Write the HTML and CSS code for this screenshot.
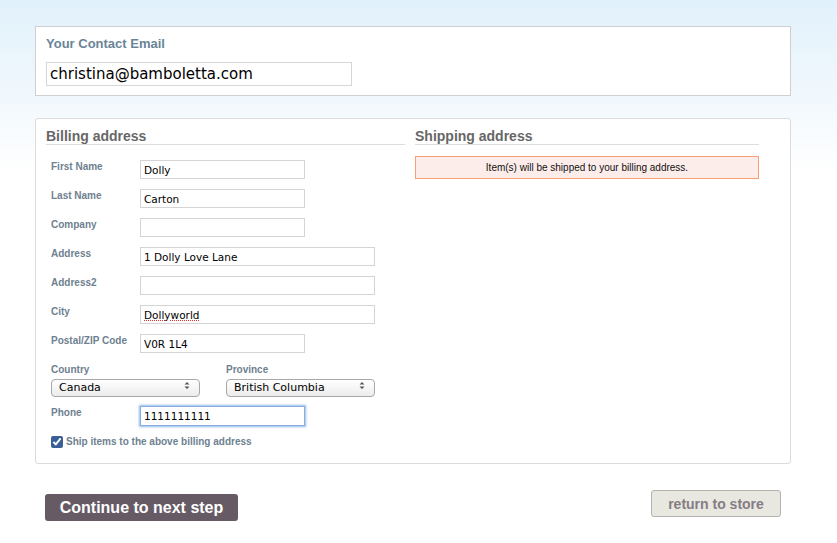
FILE: index.html
```html
<!DOCTYPE html>
<html lang="en">
<head>
    <meta charset="UTF-8">
    <meta name="viewport" content="width=device-width, initial-scale=1.0">
    <title>Checkout</title>
    <link rel="stylesheet" href="styles.css">
</head>
<body>
    <div class="page">
        <div class="box contact">
            <h3>Your Contact Email</h3>
            <input class="email" type="text" value="christina@bamboletta.com">
        </div>

        <div class="box addresses">
            <div class="billing">
                <h2>Billing address</h2>
                <div class="form">
                    <div class="row"><label>First Name</label><input type="text" value="Dolly"></div>
                    <div class="row"><label>Last Name</label><input type="text" value="Carton"></div>
                    <div class="row"><label>Company</label><input type="text" value=""></div>
                    <div class="row"><label>Address</label><input class="wide" type="text" value="1 Dolly Love Lane"></div>
                    <div class="row"><label>Address2</label><input class="wide" type="text" value=""></div>
                    <div class="row"><label>City</label><input class="wide misspelled" type="text" value="Dollyworld"></div>
                    <div class="row"><label>Postal/ZIP Code</label><input type="text" value="V0R 1L4"></div>
                    <div class="selects">
                        <div class="group">
                            <label>Country</label>
                            <div class="select-wrap">
                                <select><option>Canada</option></select>
                                <svg class="arrows" width="6" height="9" viewBox="0 0 6 9"><path d="M0.5 3.5 L3 1 L5.5 3.5 Z M0.5 5.5 L3 8 L5.5 5.5 Z" fill="#555"/></svg>
                            </div>
                        </div>
                        <div class="group">
                            <label>Province</label>
                            <div class="select-wrap">
                                <select><option>British Columbia</option></select>
                                <svg class="arrows" width="6" height="9" viewBox="0 0 6 9"><path d="M0.5 3.5 L3 1 L5.5 3.5 Z M0.5 5.5 L3 8 L5.5 5.5 Z" fill="#555"/></svg>
                            </div>
                        </div>
                    </div>
                    <div class="row phone"><label>Phone</label><input class="focused" type="text" value="1111111111"></div>
                    <div class="check">
                        <input type="checkbox" checked>
                        <span>Ship items to the above billing address</span>
                    </div>
                </div>
            </div>
            <div class="shipping">
                <h2>Shipping address</h2>
                <div class="notice">Item(s) will be shipped to your billing address.</div>
            </div>
        </div>

        <div class="actions">
            <button class="continue">Continue to next step</button>
            <button class="return">return to store</button>
        </div>
    </div>
</body>
</html>
```

FILE: styles.css
```css
html {
    height: 100%;
}
body {
    margin: 0;
    padding: 0;
    min-height: 100%;
    background: linear-gradient(#e1f1fb 0, #f3f9fd 110px, #ffffff 170px);
    font-family: "Liberation Sans", Arial, sans-serif;
}
.page {
    width: 756px;
    margin-left: 35px;
    padding-top: 26px;
}
.box {
    background: #ffffff;
    border: 1px solid #cfcfcf;
    box-sizing: border-box;
}
.contact {
    height: 70px;
    padding: 8px 10px 0;
}
.contact h3 {
    margin: 0;
    font-size: 13px;
    line-height: 18px;
    color: #6a8497;
}
.email {
    display: block;
    margin-top: 9px;
    width: 306px;
    height: 24px;
    box-sizing: border-box;
    border: 1px solid #d6d6d6;
    padding: 0 3px;
    font-family: "DejaVu Sans", sans-serif;
    font-size: 15px;
    color: #000;
    outline: none;
}
.addresses {
    margin-top: 22px;
    height: 346px;
    border-color: #dcdcdc;
    border-radius: 3px;
    padding: 9px 31px 0 10px;
    display: flex;
    gap: 10px;
}
.billing {
    width: 359px;
}
.shipping {
    width: 344px;
}
h2 {
    margin: 0;
    font-size: 14px;
    line-height: 16px;
    color: #676767;
    border-bottom: 1px solid #dddddd;
}
.form {
    margin-top: 15px;
    padding-left: 5px;
}
.row {
    display: flex;
    align-items: flex-start;
    margin-bottom: 10px;
}
label {
    font-size: 10px;
    font-weight: bold;
    line-height: 13px;
    color: #6e8190;
}
.row label {
    width: 89px;
    flex: none;
}
.row input {
    width: 165px;
    height: 19px;
    box-sizing: border-box;
    border: 1px solid #d4d4d4;
    padding: 0 3px;
    font-family: "DejaVu Sans", sans-serif;
    font-size: 10.5px;
    color: #000;
    outline: none;
}
.row input.wide {
    width: 235px;
}
.misspelled {
    text-decoration: underline dotted #e03030;
}
.selects {
    display: flex;
    gap: 26px;
}
.group label {
    display: block;
}
.select-wrap {
    position: relative;
    margin-top: 1px;
}
select {
    appearance: none;
    width: 149px;
    height: 18px;
    box-sizing: border-box;
    border: 1px solid #a8a8a8;
    border-radius: 4px;
    background: linear-gradient(#ffffff, #ececec);
    padding: 0 0 0 7px;
    font-family: "DejaVu Sans", sans-serif;
    font-size: 11px;
    color: #000;
    outline: none;
}
.arrows {
    position: absolute;
    right: 10px;
    top: 4px;
    pointer-events: none;
}
.phone {
    margin-top: 9px;
}
.row input.focused {
    height: 20px;
    border-color: #86aee0;
    box-shadow: 0 0 2px 1px #94bbe8;
}
.check {
    display: flex;
    align-items: center;
}
.check input {
    margin: 0 3px 0 0;
    width: 12px;
    height: 12px;
    accent-color: #3a5f94;
}
.check span {
    font-size: 10px;
    font-weight: bold;
    color: #6e8190;
}
.notice {
    margin-top: 11px;
    height: 23px;
    box-sizing: border-box;
    border: 1px solid #f6a073;
    background: #fdedea;
    text-align: center;
    font-size: 10px;
    line-height: 21px;
    color: #111;
}
.actions {
    display: flex;
    justify-content: space-between;
    align-items: flex-start;
    margin-top: 26px;
    padding: 0 10px;
}
button {
    font-family: "Liberation Sans", Arial, sans-serif;
    font-weight: bold;
    border-radius: 3px;
    cursor: pointer;
}
.continue {
    margin-top: 4px;
    width: 193px;
    height: 27px;
    background: #665a65;
    color: #ffffff;
    border: none;
    font-size: 16px;
    padding: 0;
}
.return {
    width: 130px;
    height: 27px;
    background: #e9e8e0;
    border: 1px solid #b5b3ad;
    color: #857d85;
    font-size: 14px;
    padding: 0;
}
```
